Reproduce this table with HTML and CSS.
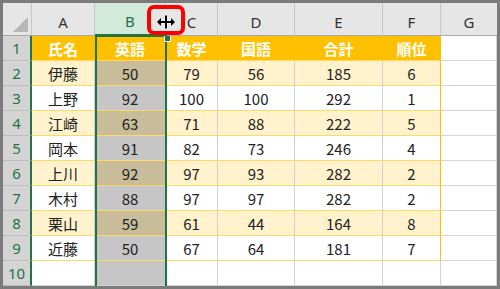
FILE: index.html
```html
<!DOCTYPE html>
<html lang="ja">
<head>
<meta charset="utf-8">
<link rel="stylesheet" href="styles.css">
</head>
<body>
<div class="sheet">
  <div class="ch corner"><span class="tri"></span></div>
  <div class="ch">A</div>
  <div class="ch sel">B</div>
  <div class="ch">C</div>
  <div class="ch">D</div>
  <div class="ch">E</div>
  <div class="ch">F</div>
  <div class="ch last">G</div>

  <div class="rh">1</div>
  <div class="c th">氏名</div>
  <div class="c th colb">英語</div>
  <div class="c th">数学</div>
  <div class="c th">国語</div>
  <div class="c th">合計</div>
  <div class="c th tr">順位</div>
  <div class="c out"></div>

  <div class="rh">2</div>
  <div class="c ev">伊藤</div><div class="c ev colb shade">50</div><div class="c ev">79</div><div class="c ev">56</div><div class="c ev">185</div><div class="c ev tr">6</div><div class="c out"></div>

  <div class="rh">3</div>
  <div class="c od">上野</div><div class="c od colb shade">92</div><div class="c od">100</div><div class="c od">100</div><div class="c od">292</div><div class="c od tr">1</div><div class="c out"></div>

  <div class="rh">4</div>
  <div class="c ev">江崎</div><div class="c ev colb shade">63</div><div class="c ev">71</div><div class="c ev">88</div><div class="c ev">222</div><div class="c ev tr">5</div><div class="c out"></div>

  <div class="rh">5</div>
  <div class="c od">岡本</div><div class="c od colb shade">91</div><div class="c od">82</div><div class="c od">73</div><div class="c od">246</div><div class="c od tr">4</div><div class="c out"></div>

  <div class="rh">6</div>
  <div class="c ev">上川</div><div class="c ev colb shade">92</div><div class="c ev">97</div><div class="c ev">93</div><div class="c ev">282</div><div class="c ev tr">2</div><div class="c out"></div>

  <div class="rh">7</div>
  <div class="c od">木村</div><div class="c od colb shade">88</div><div class="c od">97</div><div class="c od">97</div><div class="c od">282</div><div class="c od tr">2</div><div class="c out"></div>

  <div class="rh">8</div>
  <div class="c ev">栗山</div><div class="c ev colb shade">59</div><div class="c ev">61</div><div class="c ev">44</div><div class="c ev">164</div><div class="c ev tr">8</div><div class="c out"></div>

  <div class="rh">9</div>
  <div class="c od">近藤</div><div class="c od colb shade">50</div><div class="c od">67</div><div class="c od">64</div><div class="c od">181</div><div class="c od tr">7</div><div class="c out"></div>

  <div class="rh">10</div>
  <div class="c out"></div><div class="c out colb shade"></div><div class="c out"></div><div class="c out"></div><div class="c out"></div><div class="c out"></div><div class="c out"></div>

  <div class="selbox"></div>
  <div class="handle"></div>
  <div class="callout">
    <svg class="cursor" width="20" height="14" viewBox="0 0 20 14">
      <path d="M9 0.5h2v13h-2z M1 7l4-4v3h4v2H5v3z M19 7l-4-4v3h-4v2h4v3z" fill="#000" stroke="#fff" stroke-width="0.6" paint-order="stroke"/>
    </svg>
  </div>
</div>
</body>
</html>
```

FILE: styles.css
```css
html, body {
  margin: 0;
  padding: 0;
  background: #ffffff;
}

.sheet {
  position: relative;
  box-sizing: border-box;
  width: 500px;
  height: 289px;
  border: 3px solid #7b7b7b;
  display: grid;
  grid-template-columns: 29px 63px 71px 52px 77px 88px 58px 56px;
  grid-template-rows: 33px repeat(10, 25px);
  overflow: hidden;
  font-family: "Noto Sans CJK JP", "Noto Sans", sans-serif;
  font-size: 15px;
  color: #222;
  background: #fff;
}

.ch {
  box-sizing: border-box;
  background: #e6e6e6;
  border-right: 1px solid #c6c6c6;
  border-bottom: 1px solid #a8a8a8;
  display: flex;
  align-items: center;
  justify-content: center;
  padding-top: 5px;
  color: #333;
  font-family: "Noto Sans", sans-serif;
  font-size: 15px;
}

.ch.last {
  border-right: none;
}

.ch.sel {
  background: #d2eadb;
  color: #217346;
  border-bottom: 2px solid #217346;
}

.corner {
  position: relative;
  padding: 0;
}

.tri {
  position: absolute;
  right: 3px;
  bottom: 3px;
  width: 0;
  height: 0;
  border-left: 15px solid transparent;
  border-bottom: 15px solid #b7b7b7;
}

.rh {
  box-sizing: border-box;
  background: #d4d4d4;
  color: #217346;
  border-right: 2px solid #217346;
  border-bottom: 1px solid #bdbdbd;
  display: flex;
  align-items: center;
  justify-content: center;
  font-family: "Noto Sans", sans-serif;
  font-size: 15px;
}

.c {
  box-sizing: border-box;
  display: flex;
  align-items: center;
  justify-content: center;
  border-right: 1px solid #d0d0d0;
  border-bottom: 1px solid #ffd966;
}

.th {
  background: #ffc000;
  color: #fff;
  font-weight: bold;
  border-right-color: #ffc000;
  border-bottom-color: #ffd966;
}

.ev {
  background: #fff2cc;
}

.od {
  background: #fff;
}

.tr {
  border-right-color: #ffc000;
}

.ev.shade {
  background: #c8bc9b;
}

.od.shade,
.out.shade {
  background: #c6c6c6;
}

.out {
  background: #fff;
  border-right-color: #d4d4d4;
  border-bottom-color: #d4d4d4;
}

.selbox {
  position: absolute;
  left: 92px;
  top: 32px;
  width: 72px;
  height: 260px;
  box-sizing: border-box;
  border: 2px solid #217346;
  border-bottom: none;
  pointer-events: none;
}

.handle {
  position: absolute;
  left: 161px;
  top: 33px;
  width: 5px;
  height: 5px;
  background: #217346;
  border: 1px solid #fff;
  border-top: none;
}

.callout {
  position: absolute;
  left: 144px;
  top: 2px;
  width: 38px;
  height: 30px;
  box-sizing: border-box;
  border: 4px solid #ff0000;
  border-radius: 7px;
  background: #e6e6e6;
  display: flex;
  align-items: center;
  justify-content: center;
  padding-top: 3px;
}

.cursor {
  display: block;
}
```
